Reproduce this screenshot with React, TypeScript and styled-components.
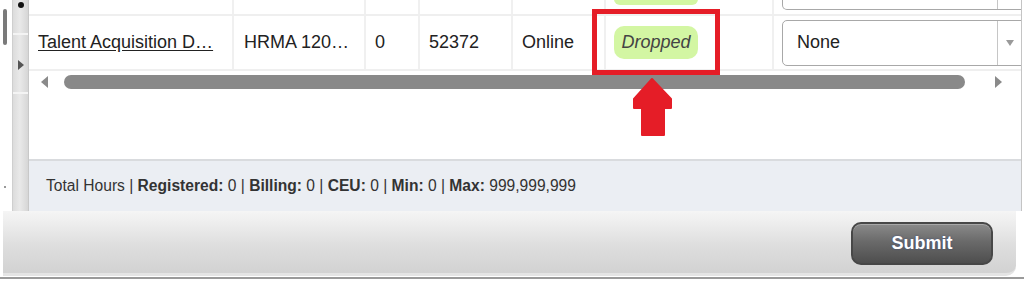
import React from "react";
import styled, { createGlobalStyle } from "styled-components";

const GlobalStyle = createGlobalStyle`
  html, body { margin: 0; padding: 0; background: #ffffff; }
  body { font-family: "Liberation Sans", Arial, sans-serif; color: #222; }
`;

const Page = styled.div`
  position: relative;
  width: 1024px;
  height: 281px;
  overflow: hidden;
  display: flex;
  flex-direction: column;
  background: #fff;
`;

const Top = styled.div`
  display: flex;
  height: 211px;
`;

const Gutter = styled.div`
  width: 12px;
  display: flex;
  flex-direction: column;
  align-items: flex-start;
`;

const GutterThumb = styled.div`
  margin: 9px 0 0 3px;
  width: 4px;
  height: 36px;
  border-radius: 2px;
  background: #7a7a7a;
`;

const GutterDot = styled.div`
  margin: 141px 0 0 4px;
  width: 2px;
  height: 2px;
  background: #999;
`;

const SideStrip = styled.div`
  width: 15px;
  display: flex;
  flex-direction: column;
  background: linear-gradient(to right, #dcdcdc, #e9e9e9 45%, #d6d6d6);
  border-left: 1px solid #cfcfcf;
  border-right: 1px solid #c8c8c8;
`;

const StripCell = styled.div<{ $h?: number }>`
  height: ${(p) => (p.$h ? `${p.$h}px` : "auto")};
  flex: ${(p) => (p.$h ? "none" : "1")};
  border-bottom: ${(p) => (p.$h ? "2px solid #f4f4f4" : "none")};
  display: flex;
  justify-content: center;
  align-items: center;
`;

const Dot = styled.div`
  width: 6px;
  height: 6px;
  border-radius: 50%;
  background: #111;
  align-self: flex-start;
  margin-top: 2px;
`;

const StripArrow = styled.div`
  width: 0;
  height: 0;
  border-top: 5px solid transparent;
  border-bottom: 5px solid transparent;
  border-left: 6px solid #555;
  margin-top: 2px;
`;

const MainPanel = styled.div`
  flex: 1;
  display: flex;
  flex-direction: column;
  border-right: 1px solid #c4c4c4;
  margin-right: 2px;
  min-width: 0;
`;

const TableArea = styled.div`
  flex: 1;
  overflow: hidden;
  display: flex;
  flex-direction: column;
  background: #fff;
`;

const Row = styled.div<{ $h: number }>`
  display: grid;
  grid-template-columns: 205px 132px 54px 93px 93px 168px 262px;
  height: ${(p) => p.$h}px;
  border-bottom: 2px solid #efefef;
  flex: none;
`;

const Cell = styled.div<{ $pad?: number }>`
  display: flex;
  align-items: center;
  padding-left: ${(p) => p.$pad ?? 9}px;
  padding-right: 8px;
  border-right: 2px solid #f0f0f0;
  font-size: 18px;
  color: #222;
  white-space: nowrap;
  overflow: hidden;
  min-width: 0;
`;

const TopCell = styled.div<{ $pad?: number }>`
  position: relative;
  padding-left: ${(p) => p.$pad ?? 9}px;
  border-right: 2px solid #f0f0f0;
  overflow: hidden;
`;

const LinkText = styled.span`
  text-decoration: underline;
  text-underline-offset: 2px;
  color: #222;
`;

const Pill = styled.div`
  display: flex;
  align-items: center;
  justify-content: center;
  flex: none;
  width: 84px;
  height: 33px;
  border-radius: 10px;
  background: #d3f6a3;
  font-style: italic;
  font-size: 18px;
  color: #444;
`;

const PillTail = styled.div`
  width: 84px;
  height: 6px;
  margin-top: -1px;
  border-radius: 0 0 8px 8px;
  background: #d3f6a3;
`;

const SelectBox = styled.div`
  display: flex;
  align-items: stretch;
  flex: none;
  width: 262px;
  height: 44px;
  border: 1px solid #a8a8a8;
  border-radius: 5px;
  background: #fff;
  font-size: 18px;
  color: #222;
`;

const SelectTail = styled.div`
  display: flex;
  width: 262px;
  height: 10px;
  margin-top: -1px;
  border: 1px solid #a8a8a8;
  border-top: none;
  border-radius: 0 0 5px 5px;
`;

const SelectValue = styled.div`
  width: 200px;
  display: flex;
  align-items: center;
  padding-left: 14px;
  border-right: 1px solid #c6c6c6;
`;

const SelectGap = styled.div`
  width: 214px;
  border-right: 1px solid #c6c6c6;
`;

const SelectArrow = styled.div`
  width: 24px;
  display: flex;
  align-items: center;
  justify-content: center;
  &::after {
    content: "";
    border-left: 4px solid transparent;
    border-right: 4px solid transparent;
    border-top: 6px solid #9a9a9a;
  }
`;

const ScrollRow = styled.div`
  display: flex;
  align-items: center;
  height: 18px;
  margin-top: 2px;
  padding-left: 12px;
  flex: none;
`;

const ScrollArrow = styled.div<{ $dir: "left" | "right" }>`
  width: 0;
  height: 0;
  border-top: 6px solid transparent;
  border-bottom: 6px solid transparent;
  ${(p) =>
    p.$dir === "left"
      ? "border-right: 7px solid #8a8a8a;"
      : "border-left: 7px solid #8a8a8a;"}
`;

const ScrollThumb = styled.div`
  width: 901px;
  height: 14px;
  margin-left: 16px;
  margin-right: 30px;
  border-radius: 7px;
  background: #898989;
`;

const Footer = styled.div`
  height: 50px;
  display: flex;
  align-items: center;
  padding-left: 17px;
  background: #ebeef3;
  border-top: 2px solid #d9dbde;
  font-size: 15.6px;
  color: #333;
  white-space: nowrap;
  flex: none;
`;

const Toolbar = styled.div`
  height: 65px;
  margin-left: 3px;
  width: 1013px;
  display: flex;
  justify-content: flex-end;
  align-items: center;
  padding-right: 23px;
  box-sizing: border-box;
  background: linear-gradient(#f5f5f5 0%, #eeeeee 18%, #dedede 55%, #d2d2d2 100%);
  border-bottom-right-radius: 10px;
  border-bottom: 3px solid #e4e4e4;
`;

const BottomLine = styled.div`
  height: 2px;
  background: #9a9a9a;
  margin-top: 1px;
`;

const SubmitButton = styled.button`
  width: 142px;
  height: 43px;
  margin-top: 2px;
  border: 2px solid #474747;
  border-radius: 10px;
  background: linear-gradient(#8a8a8a 0%, #6a6a6a 45%, #4e4e4e 100%);
  box-shadow: inset 0 1px 0 #a8a8a8;
  color: #fff;
  font-family: "Liberation Sans", Arial, sans-serif;
  font-weight: bold;
  font-size: 18px;
  text-shadow: 0 0 2px #3a4a7a;
  cursor: pointer;
`;

const Highlight = styled.div`
  position: absolute;
  left: 592px;
  top: 9px;
  width: 128px;
  height: 66px;
  box-sizing: border-box;
  border: 5px solid #e51d27;
`;

const ArrowSvg = styled.svg`
  position: absolute;
  left: 631px;
  top: 78px;
`;

export default function App() {
  return (
    <>
      <GlobalStyle />
      <Page>
        <Top>
          <Gutter>
            <GutterThumb />
            <GutterDot />
          </Gutter>
          <SideStrip>
            <StripCell $h={33}>
              <Dot />
            </StripCell>
            <StripCell $h={57}>
              <StripArrow />
            </StripCell>
            <StripCell />
          </SideStrip>
          <MainPanel>
            <TableArea>
              <Row $h={14}>
                <TopCell />
                <TopCell />
                <TopCell />
                <TopCell />
                <TopCell />
                <TopCell $pad={8}>
                  <PillTail />
                </TopCell>
                <TopCell $pad={8}>
                  <SelectTail>
                    <SelectGap />
                  </SelectTail>
                </TopCell>
              </Row>
              <Row $h={53}>
                <Cell>
                  <LinkText>Talent Acquisition D…</LinkText>
                </Cell>
                <Cell $pad={10}>HRMA 120…</Cell>
                <Cell>0</Cell>
                <Cell>52372</Cell>
                <Cell>Online</Cell>
                <Cell $pad={8}>
                  <Pill>Dropped</Pill>
                </Cell>
                <Cell $pad={8}>
                  <SelectBox>
                    <SelectValue>None</SelectValue>
                    <SelectArrow />
                  </SelectBox>
                </Cell>
              </Row>
              <ScrollRow>
                <ScrollArrow $dir="left" />
                <ScrollThumb />
                <ScrollArrow $dir="right" />
              </ScrollRow>
            </TableArea>
            <Footer>
              Total Hours |&nbsp;<b>Registered:</b>&nbsp;0 |&nbsp;<b>Billing:</b>&nbsp;0 |&nbsp;
              <b>CEU:</b>&nbsp;0 |&nbsp;<b>Min:</b>&nbsp;0 |&nbsp;<b>Max:</b>&nbsp;999,999,999
            </Footer>
          </MainPanel>
        </Top>
        <Toolbar>
          <SubmitButton>Submit</SubmitButton>
        </Toolbar>
        <BottomLine />
        <Highlight />
        <ArrowSvg width="44" height="60" viewBox="0 0 44 60">
          <path
            d="M21 1 L40 21 L40 30 L33 30 L33 57 L11 57 L11 30 L3 30 L3 21 Z"
            fill="#e51d27"
            stroke="#e51d27"
            strokeWidth="2"
            strokeLinejoin="round"
          />
        </ArrowSvg>
      </Page>
    </>
  );
}
